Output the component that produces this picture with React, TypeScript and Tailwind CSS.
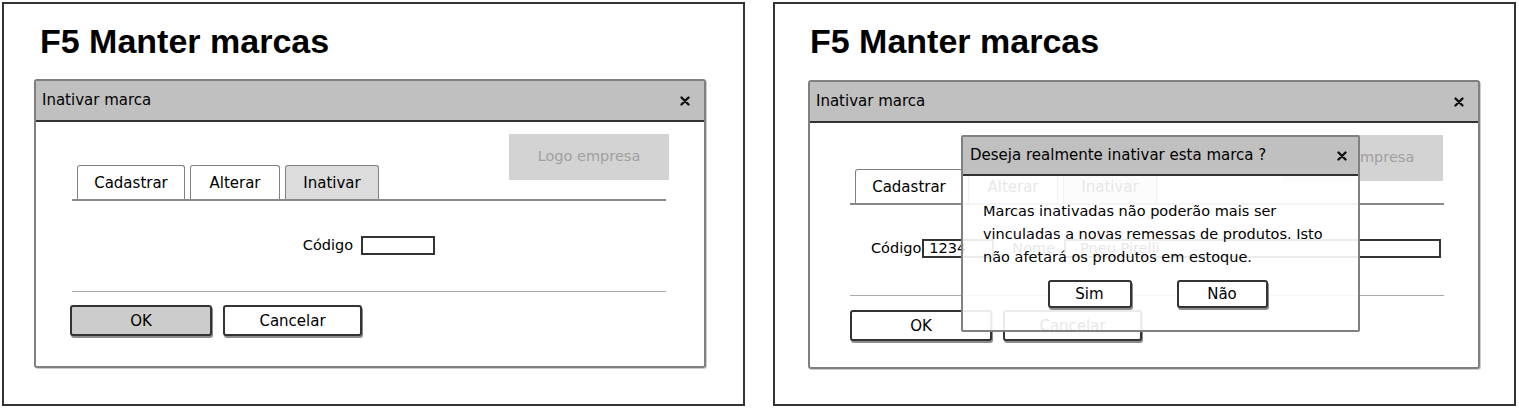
import React from "react";

/** Small bold "x" used on window title bars */
const CloseIcon = () => (
    <svg width="10" height="10" viewBox="0 0 10 10" className="shrink-0">
        <path d="M1.5 1.5L8.5 8.5M8.5 1.5L1.5 8.5" stroke="#111" strokeWidth="2.4" strokeLinecap="round" />
    </svg>
);

const TitleBar = ({ title, className }: { title: string, className: string }) => (
    <div className={`flex items-center justify-between border-b-2 border-[#333] bg-[#c0c0c0] text-[15px] ${className}`}>
        <span>{title}</span>
        <CloseIcon />
    </div>
);

interface ITab {
    label: string,
    width: string,
    active?: boolean
}

const tabs: ITab[] = [
    { label: 'Cadastrar', width: 'w-[108px]' },
    { label: 'Alterar', width: 'w-[90px]' },
    { label: 'Inativar', width: 'w-[94px]', active: true },
];

const Button = ({ label, className }: { label: string, className: string }) => (
    <button className={`flex items-center justify-center rounded-[3px] border-2 border-[#333] text-[15px] shadow-[1px_2px_0_rgba(0,0,0,0.45)] ${className}`}>
        {label}
    </button>
);

/** Logo + tab strip, stacked in one grid cell */
const TopArea = ({ height, logoClass }: { height: string, logoClass: string }) => (
    <div className={`grid ${height}`}>
        <div className={`[grid-area:1/1] mt-[12px] flex h-[46px] w-[160px] items-center justify-center self-start justify-self-end bg-[#d3d3d3] text-[14.5px] text-[#a0a0a0] ${logoClass}`}>
            Logo empresa
        </div>
        <div className="[grid-area:1/1] flex flex-col self-end">
            <div className="flex gap-[5px] pl-[5px]">
                {tabs.map((tab) => (
                    <div
                        key={tab.label}
                        className={`flex h-[34px] items-center justify-center rounded-t-[3px] border border-b-0 border-[#808080] pt-[2px] text-[15px] ${tab.width} ${tab.active ? 'bg-[#dcdcdc]' : 'bg-white'}`}>
                        {tab.label}
                    </div>
                ))}
            </div>
            <div className="h-[2px] bg-[#888]" />
        </div>
    </div>
);

const Window = ({ children, className }: { children: React.ReactNode, className: string }) => (
    <div className={`relative h-[289px] w-[672px] rounded-[3px] border-2 border-[#808080] bg-white shadow-[1px_1px_0_rgba(0,0,0,0.2)] ${className}`}>
        <TitleBar title="Inativar marca" className="h-[41px] pl-[6px] pr-[14px]" />
        {children}
    </div>
);

const Heading = ({ className }: { className: string }) => (
    <h1 className={`mt-[20px] text-[34px] font-bold leading-none font-['Liberation_Sans',Arial,sans-serif] ${className}`}>
        F5 Manter marcas
    </h1>
);

/** Left screen: the plain "Inativar" tab */
const LeftPanel = () => (
    <section className="flex h-[404px] w-[743px] flex-col border-2 border-[#333]">
        <Heading className="ml-[36px]" />
        <Window className="ml-[30px] mt-[21px]">
            <div className="pl-[36px] pr-[38px]">
                <TopArea height="h-[79px]" logoClass="-mr-[3px]" />
                <div className="mt-[35px] flex h-[19px] items-center justify-center gap-[8px] text-[14.5px] leading-[19px]">
                    <span>Código</span>
                    <div className="h-[19px] w-[74px] border-2 border-[#333]" />
                </div>
                <div className="mt-[36px] h-px bg-[#aaa]" />
                <div className="-ml-[2px] mt-[13px] flex gap-[11px]">
                    <Button label="OK" className="h-[31px] w-[142px] bg-[#cccccc] pt-[2px]" />
                    <Button label="Cancelar" className="h-[31px] w-[139px] bg-white pt-[2px]" />
                </div>
            </div>
        </Window>
    </section>
);

/** Right screen: the confirmation dialog over the form */
const RightPanel = () => (
    <section className="flex h-[404px] w-[743px] flex-col border-2 border-[#333]">
        <Heading className="ml-[35px]" />
        <Window className="ml-[33px] mt-[22px]">
            <div className="pl-[40px] pr-[34px]">
                <TopArea height="h-[82px]" logoClass="mr-[1px]" />
                <div className="ml-[21px] mt-[34px] flex h-[19px] items-center text-[14.5px] leading-[19px]">
                    <span>Código</span>
                    <div className="ml-[1px] flex h-[19px] w-[72px] items-center border-2 border-[#333] pl-[5px]">1234</div>
                    <span className="ml-[18px]">Nome</span>
                    <div className="ml-[9px] flex h-[19px] w-[377px] items-center border-2 border-[#333] pl-[14px]">Pneu Pirelli</div>
                </div>
                <div className="mt-[37px] h-px bg-[#aaa]" />
                <div className="mt-[14px] flex gap-[11px]">
                    <Button label="OK" className="h-[31px] w-[142px] bg-white pt-[2px]" />
                    <Button label="Cancelar" className="h-[31px] w-[139px] bg-white pt-[2px]" />
                </div>
            </div>

            {/* Confirmation dialog */}
            <div className="absolute left-[151px] top-[53px] flex h-[197px] w-[399px] flex-col rounded-[2px] border-2 border-[#808080] bg-white/90">
                <TitleBar title="Deseja realmente inativar esta marca ?" className="h-[39px] pl-[7px] pr-[11px]" />
                <p className="whitespace-nowrap pl-[20px] pt-[24px] text-[14.5px] leading-[23px]">
                    Marcas inativadas não poderão mais ser<br />
                    vinculadas a novas remessas de produtos. Isto<br />
                    não afetará os produtos em estoque.
                </p>
                <div className="mt-[11px] flex justify-center gap-[45px] pr-[6px]">
                    <Button label="Sim" className="h-[28px] w-[84px] bg-white" />
                    <Button label="Não" className="h-[28px] w-[91px] bg-white" />
                </div>
            </div>
        </Window>
    </section>
);

export default function App() {
    return (
        <div className="flex h-[408px] w-[1519px] gap-[28px] bg-white pl-[2px] pt-[2px] text-black font-['DejaVu_Sans',sans-serif]">
            <LeftPanel />
            <RightPanel />
        </div>
    );
}
